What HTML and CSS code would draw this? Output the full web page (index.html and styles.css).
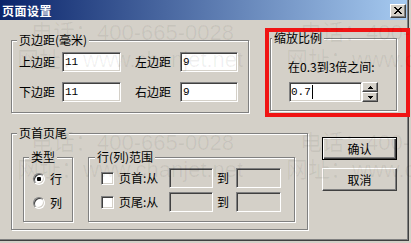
FILE: index.html
```html
<!DOCTYPE html>
<html lang="zh-CN">
<head>
    <meta charset="UTF-8">
    <meta name="viewport" content="width=device-width, initial-scale=1.0">
    <title>页面设置</title>
    <link rel="stylesheet" href="styles.css">
</head>
<body>
    <div class="window">
        <div class="titlebar">
            <span class="title">页面设置</span>
            <button class="close-btn" aria-label="关闭">
                <svg width="8" height="7" viewBox="0 0 8 7" shape-rendering="crispEdges">
                    <path d="M0 0h2v1H0zM6 0h2v1H6zM1 1h2v1H1zM5 1h2v1H5zM2 2h4v1H2zM3 3h2v1H3zM2 4h4v1H2zM1 5h2v1H1zM5 5h2v1H5zM0 6h2v1H0zM6 6h2v1H6z" fill="#000"/>
                </svg>
            </button>
        </div>

        <div class="client">
            <div class="row">
                <fieldset class="group margins">
                    <legend>页边距(毫米)</legend>
                    <div class="margin-grid">
                        <label class="field-label">上边距</label>
                        <input class="edit" type="text" value="11">
                        <label class="field-label second">左边距</label>
                        <input class="edit" type="text" value="9">
                        <label class="field-label">下边距</label>
                        <input class="edit" type="text" value="11">
                        <label class="field-label second">右边距</label>
                        <input class="edit" type="text" value="9">
                    </div>
                </fieldset>

                <fieldset class="group zoom">
                    <legend>缩放比例</legend>
                    <div class="zoom-body">
                        <div class="zoom-hint">在0.3到3倍之间:</div>
                        <div class="spin">
                            <div class="edit spin-input">0.7<span class="caret"></span></div>
                            <div class="spin-btns">
                                <button class="spin-btn" aria-label="增加">
                                    <svg width="5" height="3" viewBox="0 0 5 3" shape-rendering="crispEdges"><path d="M2 0h1v1h1v1h1v1H0V2h1V1h1z" fill="#000"/></svg>
                                </button>
                                <button class="spin-btn" aria-label="减少">
                                    <svg width="5" height="3" viewBox="0 0 5 3" shape-rendering="crispEdges"><path d="M0 0h5v1H4v1H3v1H2V2H1V1H0z" fill="#000"/></svg>
                                </button>
                            </div>
                        </div>
                    </div>
                </fieldset>
            </div>

            <div class="row">
                <fieldset class="group header-footer">
                    <legend>页首页尾</legend>
                    <div class="header-body">
                        <fieldset class="group type-group">
                            <legend>类型</legend>
                            <div class="radio-list">
                                <label class="option"><input class="radio" type="radio" name="kind" checked>行</label>
                                <label class="option"><input class="radio" type="radio" name="kind">列</label>
                            </div>
                        </fieldset>

                        <fieldset class="group range-group">
                            <legend>行(列)范围</legend>
                            <div class="range-rows">
                                <div class="range-row">
                                    <input class="check" type="checkbox">
                                    <span class="range-label">页首:从</span>
                                    <input class="edit disabled from" type="text" disabled>
                                    <span class="to">到</span>
                                    <input class="edit disabled until" type="text" disabled>
                                </div>
                                <div class="range-row">
                                    <input class="check" type="checkbox">
                                    <span class="range-label">页尾:从</span>
                                    <input class="edit disabled from" type="text" disabled>
                                    <span class="to">到</span>
                                    <input class="edit disabled until" type="text" disabled>
                                </div>
                            </div>
                        </fieldset>
                    </div>
                </fieldset>

                <div class="actions">
                    <button class="btn default">确认</button>
                    <button class="btn">取消</button>
                </div>
            </div>
        </div>
    </div>

    <div class="highlight"></div>

    <div class="watermark" aria-hidden="true">
        <div class="wm-tile"><p>电话：400-665-0028</p><p class="wm-site">网址：www.chanjet.net</p></div>
        <div class="wm-tile"><p>电话：400-665-0028</p><p class="wm-site">网址：www.chanjet.net</p></div>
        <div class="wm-tile"><p>电话：400-665-0028</p><p class="wm-site">网址：www.chanjet.net</p></div>
        <div class="wm-tile"><p>电话：400-665-0028</p><p class="wm-site">网址：www.chanjet.net</p></div>
    </div>
</body>
</html>
```

FILE: styles.css
```css
* {
    box-sizing: border-box;
}

html, body {
    margin: 0;
}

body {
    position: relative;
    width: 411px;
    height: 243px;
    overflow: hidden;
    background: #d4d0c8;
    font-family: "Noto Sans CJK SC", "Liberation Sans", sans-serif;
    font-size: 12px;
    line-height: 14px;
    color: #000;
}

.window {
    width: 409px;
    height: 241px;
    background: #d4d0c8;
    border-right: 1px solid #404040;
    border-bottom: 1px solid #404040;
    box-shadow: inset -1px -1px 0 #808080;
}

.titlebar {
    display: flex;
    align-items: center;
    width: 407px;
    height: 20px;
    padding: 1px 1px 0 2px;
    background: linear-gradient(to right, #0a246a, #a6caf0);
}

.title {
    flex: 1;
    color: #fff;
    font-weight: bold;
    letter-spacing: 0.5px;
}

.close-btn {
    display: flex;
    align-items: center;
    justify-content: center;
    width: 16px;
    height: 14px;
    padding: 0;
    background: #d4d0c8;
    border: 1px solid;
    border-color: #fff #404040 #404040 #fff;
    box-shadow: inset -1px -1px 0 #808080;
}

.client {
    padding: 11px 0 0 11px;
}

.row {
    display: flex;
    align-items: flex-start;
}

/* etched group box */
.group {
    margin: 0;
    padding: 0;
    min-width: 0;
    border: 1px solid #808080;
    box-shadow: 1px 1px 0 #fff, inset 1px 1px 0 #fff;
}

.group legend {
    margin-left: 5px;
    padding: 0 2px;
    background: #d4d0c8;
    line-height: 14px;
}

.margins {
    margin-top: 2px;
    width: 238px;
    height: 80px;
}

.margin-grid {
    display: grid;
    grid-template-columns: 43px 59px 59px 58px;
    row-gap: 10px;
    align-items: center;
    margin: 5px 0 0 7px;
}

.field-label.second {
    padding-left: 14px;
}

.edit {
    height: 20px;
    padding: 0 2px;
    background: #fff;
    border: 1px solid;
    border-color: #808080 #fff #fff #808080;
    box-shadow: inset 1px 1px 0 #404040, inset -1px -1px 0 #d4d0c8;
    font-family: "Liberation Mono", monospace;
    font-size: 11px;
    color: #000;
    outline: none;
    min-width: 0;
}

.edit.disabled {
    background: #d4d0c8;
}

.zoom {
    margin-left: 21px;
    width: 127px;
    height: 80px;
}

.zoom legend {
    margin-left: 1px;
}

.zoom-body {
    margin: 15px 0 0 17px;
}

.spin {
    display: flex;
    margin-top: 8px;
    margin-left: 1px;
}

.spin-input {
    display: flex;
    align-items: center;
    width: 73px;
    padding-left: 1px;
}

.caret {
    width: 1px;
    height: 14px;
    margin-left: 1px;
    background: #000;
}

.spin-btns {
    display: flex;
    flex-direction: column;
}

.spin-btn {
    display: flex;
    align-items: center;
    justify-content: center;
    width: 16px;
    height: 10px;
    padding: 0;
    background: #d4d0c8;
    border: 1px solid;
    border-color: #fff #404040 #404040 #fff;
    box-shadow: inset -1px -1px 0 #808080;
}

.header-footer {
    margin-top: 13px;
    width: 297px;
    height: 104px;
}

.header-body {
    display: flex;
    gap: 15px;
    margin: 10px 0 0 11px;
}

.type-group {
    width: 50px;
    height: 72px;
}

.range-group {
    width: 207px;
    height: 72px;
}

.range-group legend {
    margin-left: 6px;
}

.radio-list {
    display: flex;
    flex-direction: column;
    gap: 8px;
    margin: 7px 0 0 9px;
}

.option {
    display: flex;
    align-items: center;
    gap: 5px;
    height: 16px;
}

.radio {
    appearance: none;
    width: 12px;
    height: 12px;
    margin: 0;
    border-radius: 50%;
    background: #fff;
    border: 1px solid;
    border-color: #808080 #fff #fff #808080;
    box-shadow: inset 1px 1px 0 #404040, inset -1px -1px 0 #d4d0c8;
}

.radio:checked {
    background: radial-gradient(circle, #000 0 2px, #fff 2.5px);
}

.range-rows {
    display: flex;
    flex-direction: column;
    gap: 4px;
    margin: 4px 0 0 12px;
}

.range-row {
    display: flex;
    align-items: center;
    height: 20px;
}

.check {
    appearance: none;
    width: 13px;
    height: 13px;
    margin: 0 5px 0 0;
    background: #fff;
    border: 1px solid;
    border-color: #808080 #fff #fff #808080;
    box-shadow: inset 1px 1px 0 #404040, inset -1px -1px 0 #d4d0c8;
}

.range-label {
    width: 50px;
}

.from {
    width: 44px;
}

.to {
    margin: 0 7px 0 4px;
}

.until {
    width: 45px;
}

.actions {
    display: flex;
    flex-direction: column;
    gap: 8px;
    margin: 24px 0 0 14px;
}

.btn {
    width: 75px;
    height: 23px;
    padding: 0;
    background: #d4d0c8;
    border: 1px solid;
    border-color: #fff #404040 #404040 #fff;
    box-shadow: inset -1px -1px 0 #808080;
    font: inherit;
    color: #000;
}

.btn.default {
    border: 1px solid #000;
    box-shadow: inset 1px 1px 0 #fff, inset -1px -1px 0 #404040, inset -2px -2px 0 #808080;
}

.highlight {
    position: absolute;
    left: 265px;
    top: 28px;
    width: 145px;
    height: 89px;
    border: 4px solid #f01414;
}

.watermark {
    position: absolute;
    inset: 0;
    overflow: hidden;
    pointer-events: none;
    display: grid;
    grid-template-columns: 269px 269px;
    grid-auto-rows: 110px;
    padding: 19px 0 0 31px;
    color: rgba(0, 0, 0, 0.06);
    font: 22px/27px "Liberation Sans", "Noto Sans CJK SC", sans-serif;
    white-space: nowrap;
}

.wm-tile p {
    margin: 0;
}

.wm-site {
    margin-left: -14px !important;
}
```
